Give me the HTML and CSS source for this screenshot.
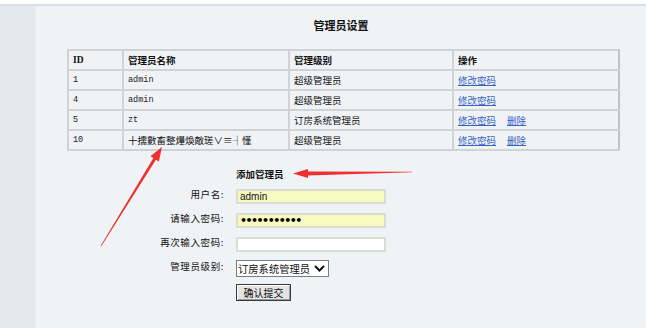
FILE: index.html
```html
<!DOCTYPE html>
<html lang="zh-CN">
<head>
<meta charset="utf-8">
<title>管理员设置</title>
<link rel="stylesheet" href="styles.css">
</head>
<body>
<div class="topbar"></div>
<div class="layout">
  <aside class="sidebar"></aside>
  <main class="main">
    <h1 class="title">管理员设置</h1>
    <table class="admins">
      <colgroup><col class="c-id"><col class="c-name"><col class="c-level"><col class="c-op"></colgroup>
      <thead>
        <tr><th class="en-b">ID</th><th>管理员名称</th><th>管理级别</th><th>操作</th></tr>
      </thead>
      <tbody>
        <tr><td class="mono">1</td><td class="mono">admin</td><td>超级管理员</td><td><a href="#">修改密码</a></td></tr>
        <tr><td class="mono">4</td><td class="mono">admin</td><td>超级管理员</td><td><a href="#">修改密码</a></td></tr>
        <tr><td class="mono">5</td><td class="mono">zt</td><td>订房系统管理员</td><td><a href="#">修改密码</a><a href="#" class="del">删除</a></td></tr>
        <tr><td class="mono">10</td><td>十擩數畜整爗煥敵瑳∨≡┤慬</td><td>超级管理员</td><td><a href="#">修改密码</a><a href="#" class="del">删除</a></td></tr>
      </tbody>
    </table>
    <form class="add-form">
      <span></span><h2 class="form-title">添加管理员</h2>
      <label class="lbl" for="u">用户名:</label><input id="u" class="field hl" type="text" value="admin">
      <label class="lbl" for="p1">请输入密码:</label><input id="p1" class="field hl pw" type="password" value="12345678901">
      <label class="lbl" for="p2">再次输入密码:</label><input id="p2" class="field" type="password" value="">
      <label class="lbl" for="lv">管理员级别:</label>
      <span class="select-box"><select id="lv" class="select"><option>订房系统管理员</option><option>超级管理员</option></select><svg class="chev" width="11" height="7" viewBox="0 0 11 7"><path d="M1 1 L5.5 5.5 L10 1" fill="none" stroke="#111" stroke-width="2"/></svg></span>
      <span></span><button type="button" class="btn">确认提交</button>
    </form>
  </main>
</div>
<svg class="arrows" width="646" height="328" viewBox="0 0 646 328">
  <polygon fill="#f0302e" points="162,147 158.9,161.5 155.9,159.7 101.3,246.2 100.7,245.8 153.4,158.1 150.4,156.3"/>
  <polygon fill="#f0302e" points="293,173.5 308,169 308,171.6 412,171.7 412,172.3 308,175.6 308,178"/>
</svg>
</body>
</html>
```
FILE: styles.css
```css
html, body {
  margin: 0;
  padding: 0;
}
body {
  width: 646px;
  height: 328px;
  overflow: hidden;
  font-family: "Noto Sans CJK SC", "Liberation Sans", sans-serif;
  font-size: 9.5px;
  color: #111;
  background: #eff3f6;
  position: relative;
}
.topbar {
  height: 4px;
  background: #ffffff;
  border-bottom: 2px solid #d9dde0;
}
.layout {
  display: flex;
  height: 322px;
}
.sidebar {
  width: 34px;
  background: #e2e8eb;
  border-right: 2px solid #e6eaec;
}
.main {
  flex: 1;
  background: #eff3f6;
  padding-top: 12px;
}
.title {
  margin: 0;
  text-align: center;
  font-size: 11px;
  line-height: 14px;
  font-weight: bold;
}
.admins {
  margin: 17px 0 0 31px;
  width: 551px;
  table-layout: fixed;
  border-collapse: collapse;
}
.c-id { width: 55px; }
.c-name { width: 166px; }
.c-level { width: 164px; }
.c-op { width: 166px; }
.admins th, .admins td {
  height: 18px;
  padding: 0 0 0 4px;
  border: 2px solid #cfd3d7;
  text-align: left;
  vertical-align: middle;
  font-size: 9.5px;
  line-height: 12px;
  white-space: nowrap;
  overflow: hidden;
}
.admins th {
  font-weight: bold;
}
.admins th:last-child, .admins td:last-child {
  border-right-color: #bfc3c6;
}
.en-b {
  font-family: "Liberation Serif", serif;
}
.mono {
  font-family: "Liberation Mono", monospace;
  font-size: 8.5px !important;
  color: #222;
}
.admins a {
  color: #3a62c4;
  text-decoration: underline;
}
.admins .del {
  margin-left: 11px;
}
.add-form {
  display: grid;
  grid-template-columns: 74px 150px;
  grid-template-rows: 20px repeat(5, 24px);
  column-gap: 12px;
  align-items: center;
  margin: 13px 0 0 114px;
}
.form-title {
  margin: 0;
  font-size: 9.5px;
  font-weight: bold;
}
.lbl {
  justify-self: end;
  letter-spacing: 0.6px;
  position: relative;
  top: -2px;
}
.field {
  box-sizing: border-box;
  width: 150px;
  height: 15px;
  margin: 0;
  padding: 0 2px;
  border: 2px solid #dcdcd6;
  background: #ffffff;
  font-family: "Liberation Sans", sans-serif;
  font-size: 10px;
  color: #111;
  outline: none;
}
.hl {
  background: #f8fbc0;
}
.pw {
  font-family: "DejaVu Sans", sans-serif;
  font-size: 11px;
  font-weight: bold;
  letter-spacing: -1.5px;
  color: #000;
}
.select-box {
  justify-self: start;
  box-sizing: border-box;
  width: 93px;
  height: 17px;
  display: flex;
  align-items: center;
  border: 1px solid #7d7d7d;
  background: #ffffff;
  padding: 0 3px 0 1px;
}
.select {
  appearance: none;
  -webkit-appearance: none;
  flex: 1;
  min-width: 0;
  border: 0;
  padding: 0;
  margin: 0;
  background: transparent;
  font-family: "Noto Sans CJK SC", sans-serif;
  font-size: 10.3px;
  color: #111;
  outline: none;
}
.chev {
  flex: none;
}
.btn {
  justify-self: start;
  box-sizing: border-box;
  width: 55px;
  height: 17px;
  margin: 0;
  padding: 0;
  border: 1px solid #3a3a3a;
  background: #e4e4e4;
  box-shadow: inset 1px 1px #ffffff, inset -1px -1px #9a9a9a;
  font-family: "Noto Sans CJK SC", sans-serif;
  font-size: 10px;
  color: #111;
}
.arrows {
  position: absolute;
  top: 0;
  left: 0;
  pointer-events: none;
}
```
